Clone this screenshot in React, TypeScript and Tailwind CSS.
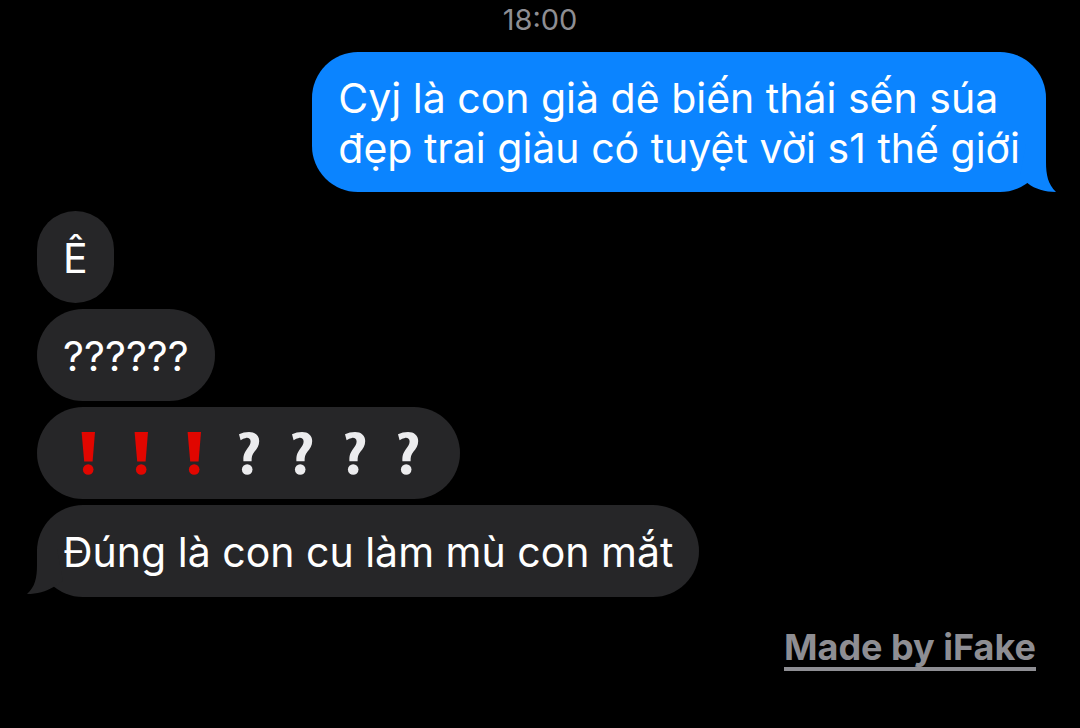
import type { ReactNode } from "react";
import clsx from "clsx";

type Message = {
  id: number;
  from: "me" | "them";
  content: ReactNode;
  tail?: boolean;
};

function Exclamation() {
  return (
    <svg viewBox="0 0 53 50" className="h-[50px] w-[53px]" fill="#e10600" role="img" aria-label="❗">
      <path d="M18.6 3H32L29.6 32.5H21.2Z" />
      <circle cx="25.2" cy="40.5" r="5.3" />
    </svg>
  );
}

function Question() {
  return (
    <svg viewBox="0 0 53 50" className="h-[50px] w-[53px]" fill="#ececee" role="img" aria-label="❔">
      <path d="M17 5.2Q21.5 3 27 3C33 3 37.2 6.4 37.2 12C37.2 16.6 35 19.6 32.4 22.8C30 26 29.6 28 29.6 32.2H21.4C21.2 26.4 22.2 24 25.2 19.8C27.4 16.8 28.6 15 28.6 12.6C28.6 9.6 26.6 8.6 24 8.9Q21.2 9.3 18.6 11.2Z" />
      <circle cx="25.2" cy="40.5" r="5.3" />
    </svg>
  );
}

function Tail({ from }: { from: Message["from"] }) {
  if (from === "me") {
    return (
      <svg
        viewBox="0 0 40 48"
        className="absolute -right-[10px] bottom-0 h-12 w-10 text-[#0b84ff]"
        fill="currentColor"
        aria-hidden="true"
      >
        <path d="M10 0H30V18C30 31 32 40 40 48C29 48 19 45 12 39.5L4 32Z" />
      </svg>
    );
  }
  return (
    <svg
      viewBox="0 0 40 48"
      className="absolute -left-[10px] bottom-0 h-12 w-10 text-[#262628]"
      fill="currentColor"
      aria-hidden="true"
    >
      <path d="M30 0H10V16C10 29 8 38 0 45C10 45 19 42.5 26.5 38L36 32Z" />
    </svg>
  );
}

function Bubble({ from, tail, content }: Omit<Message, "id">) {
  return (
    <li
      className={clsx(
        "relative w-fit rounded-[46px] px-[26px] text-[41px] leading-[50px] text-white",
        from === "me" ? "mb-[13px] self-end bg-[#0b84ff] pt-[21px] pb-[19px]" : "self-start bg-[#262628] pt-[22px] pb-5",
      )}
    >
      {tail && <Tail from={from} />}
      <div className="relative">{content}</div>
    </li>
  );
}

const messages: Message[] = [
  {
    id: 1,
    from: "me",
    tail: true,
    content: (
      <>
        Cyj là con già dê biến thái sến súa
        <br />
        đẹp trai giàu có tuyệt vời s1 thế giới
      </>
    ),
  },
  { id: 2, from: "them", content: "Ê" },
  { id: 3, from: "them", content: "??????" },
  {
    id: 4,
    from: "them",
    content: (
      <div className="flex">
        <Exclamation />
        <Exclamation />
        <Exclamation />
        <Question />
        <Question />
        <Question />
        <Question />
      </div>
    ),
  },
  { id: 5, from: "them", tail: true, content: "Đúng là con cu làm mù con mắt" },
];

export default function App() {
  return (
    <main className="flex min-h-screen flex-col bg-black font-['Inter','Liberation_Sans',sans-serif]">
      <time className="pt-1 text-center text-[29px] leading-8 text-[#8e8e93]">18:00</time>
      <ul className="mt-4 flex flex-col gap-[6px] pr-[34px] pl-[37px]">
        {messages.map((message) => (
          <Bubble key={message.id} from={message.from} tail={message.tail} content={message.content} />
        ))}
      </ul>
      <footer className="mt-[30px] flex justify-end pr-11">
        <a href="#" className="border-b-4 border-[#8e8e93] text-[36px] leading-10 font-bold text-[#8e8e93]">
          Made by iFake
        </a>
      </footer>
    </main>
  );
}
